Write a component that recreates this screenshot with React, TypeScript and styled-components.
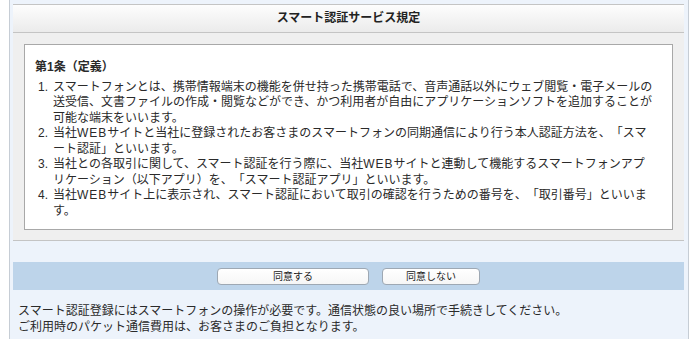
import styled, { createGlobalStyle } from "styled-components";

const GlobalStyle = createGlobalStyle`
  body {
    margin: 0;
    background: #fff;
    color: #222;
    font-family: "Liberation Sans", "Noto Sans CJK JP", sans-serif;
    text-spacing-trim: space-all;
  }
`;

const sections = [
  {
    title: "第1条（定義）",
    items: [
      "スマートフォンとは、携帯情報端末の機能を併せ持った携帯電話で、音声通話以外にウェブ閲覧・電子メールの送受信、文書ファイルの作成・閲覧などができ、かつ利用者が自由にアプリケーションソフトを追加することが可能な端末をいいます。",
      "当社WEBサイトと当社に登録されたお客さまのスマートフォンの同期通信により行う本人認証方法を、「スマート認証」といいます。",
      "当社との各取引に関して、スマート認証を行う際に、当社WEBサイトと連動して機能するスマートフォンアプリケーション（以下アプリ）を、「スマート認証アプリ」といいます。",
      "当社WEBサイト上に表示され、スマート認証において取引の確認を行うための番号を、「取引番号」といいます。",
    ],
  },
  {
    title: "第2条（利用条件）",
    items: [
      "スマート認証は、当社所定の手続きによりアプリを登録したお客さまがご利用いただけます。",
    ],
  },
];

// latin runs get their own span so their width follows the original page
const withLatin = (text: string) =>
  text.split(/([A-Za-z]+)/).map((part, i) =>
    i % 2 === 1 ? <Latin key={i}>{part}</Latin> : part
  );

const App = () => {
  return (
    <>
      <GlobalStyle />
      <Frame>
        <Header>スマート認証サービス規定</Header>
        <Content>
          <TermsBox>
            {sections.map((section, s) => (
              <Article key={s}>
                <ArticleTitle>{section.title}</ArticleTitle>
                {section.items.map((text, i) => (
                  <Item key={i}>
                    <Num>{i + 1}.</Num>
                    <ItemText>{withLatin(text)}</ItemText>
                  </Item>
                ))}
              </Article>
            ))}
          </TermsBox>
        </Content>
        <Actions>
          <Button $width={152}>同意する</Button>
          <Button $width={98}>同意しない</Button>
        </Actions>
        <Notes>
          スマート認証登録にはスマートフォンの操作が必要です。通信状態の良い場所で手続きしてください。
          <br />
          ご利用時のパケット通信費用は、お客さまのご負担となります。
        </Notes>
      </Frame>
    </>
  );
};

export default App;

const Frame = styled.div`
  margin-left: 9px;
  width: 671px;
  padding: 4px 4px 20px 3px;
  background: #edf3fb;
  border-left: 1px solid #c6cdd5;
  border-right: 1px solid #c6cdd5;
`;

const Header = styled.div`
  height: 27px;
  line-height: 27px;
  text-align: center;
  font-size: 12px;
  font-weight: bold;
  color: #222;
  background: linear-gradient(#fdfdfd, #ebebeb);
  border-top: 1px solid #c4c4c4;
  border-bottom: 1px solid #c4c4c4;
`;

const Content = styled.div`
  background: #efefef;
  padding: 11px 11px 10px;
  border-bottom: 1px solid #c4c4c4;
`;

const TermsBox = styled.div`
  box-sizing: border-box;
  height: 186px;
  overflow: hidden;
  background: #fff;
  border: 1px solid #a8a8a8;
  padding: 15px 18px 0 10px;
  font-size: 12px;
  line-height: 15.5px;
  color: #2a2a2a;
`;

const Article = styled.div`
  & + & {
    margin-top: 16px;
  }
`;

const ArticleTitle = styled.div`
  font-weight: bold;
  margin-bottom: 4px;
`;

const Item = styled.div`
  display: flex;
`;

const Num = styled.span`
  flex: 0 0 18px;
  box-sizing: border-box;
  padding-left: 3px;
`;

const ItemText = styled.span`
  flex: 1;
`;

const Latin = styled.span`
  letter-spacing: 1px;
`;

const Actions = styled.div`
  margin-top: 21px;
  background: #bdd4ea;
  padding: 6px 0 5px;
  display: flex;
  justify-content: center;
  gap: 13px;
`;

const Button = styled.button<{ $width: number }>`
  width: ${({ $width }) => $width}px;
  height: 17px;
  padding: 0;
  background: linear-gradient(#ffffff, #f6f6f6);
  border: 1px solid #9ea8b3;
  border-radius: 4px;
  font-family: inherit;
  font-size: 10px;
  line-height: 15px;
  color: #222;
`;

const Notes = styled.div`
  padding: 13px 5px 0;
  font-size: 12px;
  line-height: 16px;
  color: #2a2a2a;
`;
